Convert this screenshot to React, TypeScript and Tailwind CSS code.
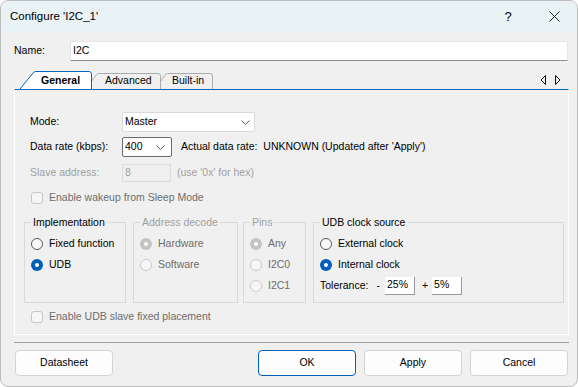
import React from "react";

const Chevron = () => (
  <svg width="9" height="5" viewBox="0 0 9 5">
    <path d="M0.5 0.5 L4.5 4.5 L8.5 0.5" fill="none" stroke="#606060" strokeWidth="1" />
  </svg>
);

interface RadioProps {
  label: string;
  checked?: boolean;
  disabled?: boolean;
}

const Radio: React.FC<RadioProps> = ({ label, checked, disabled }) => {
  return (
    <div className="h-[21px] flex items-center">
      {checked ? (
        <span
          className={`w-[12px] h-[12px] rounded-full flex items-center justify-center ${
            disabled ? "bg-[#c4c4c4]" : "bg-[#005fb8]"
          }`}
        >
          <span className="w-[4px] h-[4px] rounded-full bg-white" />
        </span>
      ) : (
        <span
          className={`w-[12px] h-[12px] rounded-full border ${
            disabled ? "border-[#cbcbcb] bg-[#f7f7f7]" : "border-[#595959] bg-[#f9f9f9]"
          }`}
        />
      )}
      <span className={`ml-[6px] ${disabled ? "text-[#6d6d6d]" : "text-black"}`}>{label}</span>
    </div>
  );
};

const Checkbox: React.FC<{ label: string }> = ({ label }) => (
  <div className="h-[16px] flex items-center pl-[1px]">
    <span className="w-[12px] h-[12px] rounded-[3px] border border-[#c6c6c6] bg-[#f6f6f6]" />
    <span className="ml-[6px] text-[#6d6d6d]">{label}</span>
  </div>
);

const GroupBox: React.FC<{ title: string; disabled?: boolean; className?: string; children: React.ReactNode }> = ({
  title,
  disabled,
  className,
  children,
}) => (
  <fieldset className={`border border-[#dadada] px-[6px] h-[88px] ${className ?? ""}`}>
    <legend className={`px-[2px] leading-[14px] ${disabled ? "text-[#a0a0a0]" : "text-black"}`}>{title}</legend>
    <div className="mt-[4px]">{children}</div>
  </fieldset>
);

const DialogButton: React.FC<{ label: string; primary?: boolean; className?: string }> = ({ label, primary, className }) => (
  <button
    className={`w-[98px] h-[26px] rounded-[4px] bg-[#fdfdfd] border ${
      primary ? "border-[#005fb8]" : "border-[#d3d3d3]"
    } text-black ${className ?? ""}`}
  >
    {label}
  </button>
);

export default function App() {
  return (
    <div className="w-[578px] h-[387px] bg-[#f0f0f0] border border-[#bdbdbd] rounded-[8px] overflow-hidden flex flex-col font-['Liberation_Sans',Arial,sans-serif] text-[10.5px] text-black">
      {/* Title bar */}
      <div className="h-[31px] bg-[#e9f2f5] flex items-center shrink-0">
        <span className="ml-[9px] text-[11.5px]">Configure 'I2C_1'</span>
        <div className="ml-auto flex h-full">
          <div className="w-[46px] flex items-center justify-center text-[13px]">?</div>
          <div className="w-[46px] flex items-center justify-center">
            <svg width="11" height="11" viewBox="0 0 11 11">
              <path d="M0.5 0.5 L10.5 10.5 M10.5 0.5 L0.5 10.5" stroke="#222" strokeWidth="1" />
            </svg>
          </div>
        </div>
      </div>

      <div className="pl-[13px] w-[568px] flex flex-col">
        {/* Name */}
        <div className="mt-[9px] h-[20px] flex items-center">
          <span className="w-[56px]">Name:</span>
          <div className="w-[498px] h-[20px] bg-white border border-[#e6e6e6] border-b-[#8f8f8f] flex items-center pl-[2px]">
            I2C
          </div>
        </div>

        {/* Tabs */}
        <div className="mt-[10px] h-[18px] flex items-end">
          <div className="relative z-10 ml-[3px] w-[76px] h-[18px] flex items-center pl-[24px] pt-[1px] font-bold">
            <svg className="absolute inset-0" width="76" height="18" viewBox="0 0 76 18">
              <path
                d="M3 18 L16 2 Q17.2 0.5 19 0.5 L72 0.5 Q74.5 0.5 74.5 3 L74.5 18"
                fill="#ffffff"
                stroke="#0067c0"
                strokeWidth="1"
              />
            </svg>
            <span className="relative">General</span>
          </div>
          <div className="relative ml-[-2px] w-[70px] h-[16px] flex items-center pl-[14px]">
            <svg className="absolute inset-0" width="70" height="16" viewBox="0 0 70 16">
              <path
                d="M0.5 16 L0.5 8.5 L5.5 1.5 Q6.2 0.5 7.5 0.5 L67 0.5 Q69.5 0.5 69.5 3 L69.5 16"
                fill="#f0f0f0"
                stroke="#ababab"
                strokeWidth="1"
              />
            </svg>
            <span className="relative">Advanced</span>
          </div>
          <div className="relative ml-[-1px] w-[53px] h-[16px] flex items-center pl-[12px]">
            <svg className="absolute inset-0" width="53" height="16" viewBox="0 0 53 16">
              <path
                d="M0.5 16 L0.5 8.5 L5.5 1.5 Q6.2 0.5 7.5 0.5 L50 0.5 Q52.5 0.5 52.5 3 L52.5 16"
                fill="#f0f0f0"
                stroke="#ababab"
                strokeWidth="1"
              />
            </svg>
            <span className="relative">Built-in</span>
          </div>
          <div className="ml-auto mr-[8px] mb-[4px] flex gap-[9px]">
            <svg width="6" height="10" viewBox="0 0 6 10">
              <path d="M5.5 0.5 L1 5 L5.5 9.5 Z" fill="none" stroke="#111" strokeWidth="1" />
            </svg>
            <svg width="6" height="10" viewBox="0 0 6 10">
              <path d="M0.5 0.5 L5 5 L0.5 9.5 Z" fill="none" stroke="#111" strokeWidth="1" />
            </svg>
          </div>
        </div>

        {/* Tab panel */}
        <div className="h-[246px] border border-white border-t-[#0067c0] flex flex-col pl-[15px]">
          <div className="mt-[22px] h-[20px] flex items-center">
            <span className="w-[92px]">Mode:</span>
            <div className="w-[133px] h-[20px] bg-white border border-[#dadada] rounded-[2px] flex items-center pl-[2px] pr-[4px]">
              <span>Master</span>
              <span className="ml-auto">
                <Chevron />
              </span>
            </div>
          </div>

          <div className="mt-[5px] h-[20px] flex items-center">
            <span className="w-[92px]">Data rate (kbps):</span>
            <div className="w-[50px] h-[20px] bg-white border border-[#6b6b6b] rounded-[2px] flex items-center pl-[2px] pr-[6px]">
              <span>400</span>
              <span className="ml-auto">
                <Chevron />
              </span>
            </div>
            <span className="ml-[9px]">Actual data rate:&nbsp; UNKNOWN (Updated after 'Apply')</span>
          </div>

          <div className="mt-[7px] h-[18px] flex items-center text-[#a0a0a0]">
            <span className="w-[92px]">Slave address:</span>
            <div className="w-[49px] h-[18px] border border-[#dcdcdc] flex items-center pl-[2px]">8</div>
            <span className="ml-[6px]">(use '0x' for hex)</span>
          </div>

          <div className="mt-[8px]">
            <Checkbox label="Enable wakeup from Sleep Mode" />
          </div>

          {/* Group boxes */}
          <div className="mt-[9px] ml-[-6px] flex">
            <GroupBox title="Implementation" className="w-[102px]">
              <Radio label="Fixed function" />
              <Radio label="UDB" checked />
            </GroupBox>
            <GroupBox title="Address decode" disabled className="w-[105px] ml-[7px]">
              <Radio label="Hardware" checked disabled />
              <Radio label="Software" disabled />
            </GroupBox>
            <GroupBox title="Pins" disabled className="w-[63px] ml-[5px]">
              <Radio label="Any" checked disabled />
              <Radio label="I2C0" disabled />
              <Radio label="I2C1" disabled />
            </GroupBox>
            <GroupBox title="UDB clock source" className="w-[251px] ml-[7px]">
              <Radio label="External clock" />
              <Radio label="Internal clock" checked />
              <div className="h-[21px] flex items-center">
                <span>Tolerance:</span>
                <span className="ml-[8px]">-</span>
                <div className="ml-[5px] w-[30px] h-[18px] bg-white border-b border-r border-[#9a9a9a] flex items-center pl-[2px]">
                  25%
                </div>
                <span className="ml-[7px]">+</span>
                <div className="ml-[4px] w-[30px] h-[18px] bg-white border-b border-r border-[#9a9a9a] flex items-center pl-[2px]">
                  5%
                </div>
              </div>
            </GroupBox>
          </div>

          <div className="mt-[6px]">
            <Checkbox label="Enable UDB slave fixed placement" />
          </div>
        </div>

        {/* Separator */}
        <div className="mt-[7px] h-px bg-[#a0a0a0]" />

        {/* Buttons */}
        <div className="mt-[7px] flex">
          <DialogButton label="Datasheet" className="ml-[1px]" />
          <DialogButton label="OK" primary className="ml-auto" />
          <DialogButton label="Apply" className="ml-[8px]" />
          <DialogButton label="Cancel" className="ml-[8px] mr-[1px]" />
        </div>
      </div>
    </div>
  );
}
